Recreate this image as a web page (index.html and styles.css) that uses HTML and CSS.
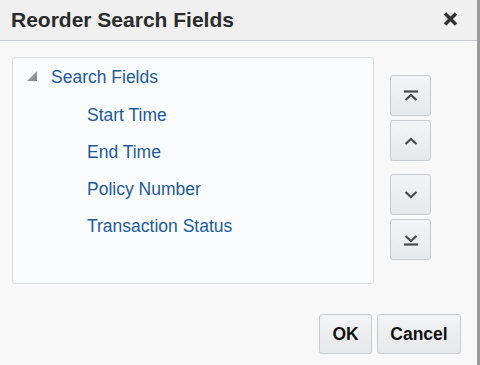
FILE: index.html
```html
<!DOCTYPE html>
<html lang="en">
<head>
    <meta charset="UTF-8">
    <title>Reorder Search Fields</title>
    <link rel="stylesheet" href="styles.css">
</head>
<body>
    <div class="dialog">
        <div class="dialog-header">
            <h1 class="dialog-title">Reorder Search Fields</h1>
            <span class="close-btn">
                <svg width="15" height="14" viewBox="0 0 15 14"><path d="M2 1.5 L13 12.5 M13 1.5 L2 12.5" stroke="#333" stroke-width="3.5"/></svg>
            </span>
        </div>
        <div class="dialog-body">
            <div class="tree">
                <div class="tree-root">
                    <svg class="disclosure" width="10" height="10" viewBox="0 0 10 10">
                        <defs>
                            <linearGradient id="tri" x1="0" y1="0" x2="1" y2="1">
                                <stop offset="0" stop-color="#c4c4c4"/>
                                <stop offset="1" stop-color="#7a7a7a"/>
                            </linearGradient>
                        </defs>
                        <polygon points="10,0 10,10 0,10" fill="url(#tri)"/>
                    </svg>
                    <span>Search Fields</span>
                </div>
                <div class="tree-item">Start Time</div>
                <div class="tree-item">End Time</div>
                <div class="tree-item">Policy Number</div>
                <div class="tree-item">Transaction Status</div>
            </div>
            <div class="move-buttons">
                <div class="move-group">
                    <button class="move-btn" title="Move to top">
                        <svg width="16" height="12" viewBox="0 0 16 12"><path d="M1 1.5 H15" stroke="#4a4a4a" stroke-width="2.2"/><path d="M2.5 10 L8 5 L13.5 10" fill="none" stroke="#4a4a4a" stroke-width="2.2"/></svg>
                    </button>
                    <button class="move-btn" title="Move up">
                        <svg width="16" height="10" viewBox="0 0 16 10"><path d="M2.5 8 L8 3 L13.5 8" fill="none" stroke="#4a4a4a" stroke-width="2.2"/></svg>
                    </button>
                </div>
                <div class="move-group">
                    <button class="move-btn" title="Move down">
                        <svg width="16" height="10" viewBox="0 0 16 10"><path d="M2.5 2 L8 7 L13.5 2" fill="none" stroke="#4a4a4a" stroke-width="2.2"/></svg>
                    </button>
                    <button class="move-btn" title="Move to bottom">
                        <svg width="16" height="12" viewBox="0 0 16 12"><path d="M2.5 2 L8 7 L13.5 2" fill="none" stroke="#4a4a4a" stroke-width="2.2"/><path d="M1 10.5 H15" stroke="#4a4a4a" stroke-width="2.2"/></svg>
                    </button>
                </div>
            </div>
        </div>
        <div class="dialog-footer">
            <button class="footer-btn ok-btn">OK</button>
            <button class="footer-btn cancel-btn">Cancel</button>
        </div>
    </div>
</body>
</html>
```
FILE: styles.css
```css
body {
    margin: 0;
    font-family: "Liberation Sans", Arial, sans-serif;
    background: #f8f8f8;
}

.dialog {
    width: 477px;
    height: 365px;
    border-right: 3px solid #9a9a9a;
    background: #f8f8f8;
    display: flex;
    flex-direction: column;
}

.dialog-header {
    height: 40px;
    border-bottom: 1px solid #c9cdd1;
    background: #f0f0f0;
    display: flex;
    align-items: center;
    justify-content: space-between;
    padding: 0 19px 0 11px;
}

.dialog-title {
    margin: 0;
    font-size: 21px;
    font-weight: bold;
    color: #2b2b2b;
}

.close-btn {
    display: flex;
    margin-top: -2px;
}

.dialog-body {
    display: flex;
    padding: 16px 0 0 12px;
}

.tree {
    width: 360px;
    height: 225px;
    border: 1px solid #dcdfe2;
    border-radius: 3px;
    background: #fbfcfd;
}

.tree-root {
    display: flex;
    align-items: center;
    height: 20px;
    margin-top: 9px;
    padding-left: 14px;
    font-size: 17.5px;
    color: #1d5b98;
}

.disclosure {
    margin-right: 14px;
    margin-top: -3px;
}

.tree-item {
    height: 37px;
    line-height: 37px;
    padding-left: 74px;
    font-size: 17.5px;
    color: #1d5b98;
}

.tree-root + .tree-item {
    margin-top: 10px;
}

.move-buttons {
    display: flex;
    flex-direction: column;
    gap: 13px;
    margin: 18px 0 0 16px;
}

.move-group {
    display: flex;
    flex-direction: column;
    gap: 4px;
}

.move-btn {
    width: 41px;
    height: 41px;
    padding: 0;
    border: 1px solid #c8ccd0;
    border-radius: 3px;
    background: linear-gradient(#f3f4f5, #e6e8ea);
    display: flex;
    align-items: center;
    justify-content: center;
}

.dialog-footer {
    display: flex;
    justify-content: flex-end;
    gap: 5px;
    margin-top: 30px;
    padding-right: 16px;
}

.footer-btn {
    height: 40px;
    padding: 0;
    border: 1px solid #c8ccd0;
    border-radius: 3px;
    background: linear-gradient(#f2f3f4, #e6e8ea);
    font-family: "Liberation Sans", Arial, sans-serif;
    font-size: 17.5px;
    font-weight: bold;
    color: #111;
}

.ok-btn {
    width: 53px;
}

.cancel-btn {
    width: 84px;
}
```
